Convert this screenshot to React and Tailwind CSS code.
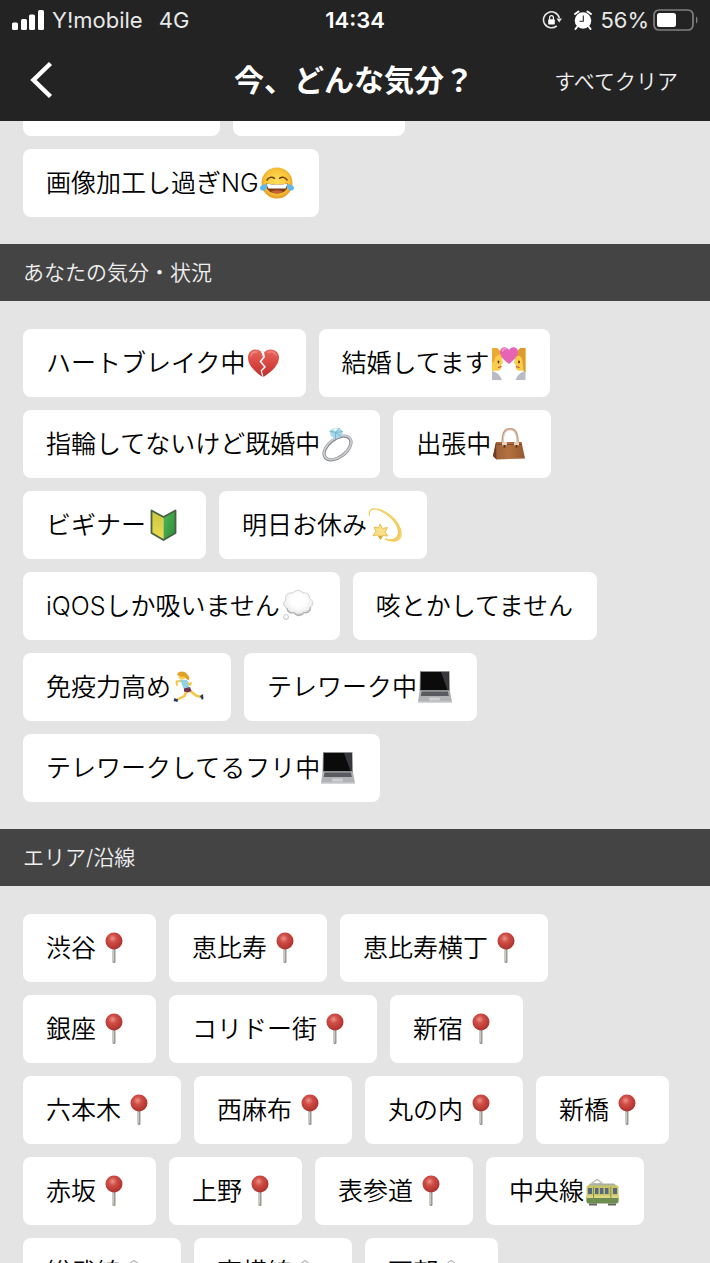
import React from "react";

const ICON = "h-9 w-9 shrink-0";

function Joy() {
  return (
    <svg viewBox="0 0 36 36" className={ICON} aria-hidden="true">
      <defs>
        <radialGradient id="joyFace" cx="50%" cy="45%" r="55%">
          <stop offset="0" stopColor="#fde05a" />
          <stop offset="0.7" stopColor="#f9c338" />
          <stop offset="1" stopColor="#e39a25" />
        </radialGradient>
      </defs>
      <circle cx="18" cy="18" r="15.500" fill="url(#joyFace)" />
      <path d="M8 15c1.800-3 5-3.400 7.500-1.700M20.500 13.300c2.500-1.700 5.700-1.300 7.500 1.700" fill="none" stroke="#6b3c10" strokeWidth="1.500" strokeLinecap="round" />
      <path d="M7 18.500c7 1.200 15 1.200 22 0 .3 6.500-4.500 10-11 10S6.700 25 7 18.500z" fill="#7a3b16" />
      <path d="M8 18.700c6.500 1.200 13.500 1.200 20 0-.1 2.500-.8 3.800-1.600 4.800H9.600C8.800 22.500 8.100 21.200 8 18.700z" fill="#fff" />
      <path d="M12 26.800c3-2 9-2 12 0-3.500 2-8.500 2-12 0z" fill="#c9603c" />
      <path d="M7.800 18.500c.8 3.500-.5 7-3.700 7.200-3.500 0-4-3.800-1.600-5.200 1.800-1 3.600-.7 5.300-2zM28.200 18.500c-.8 3.500.5 7 3.700 7.200 3.500 0 4-3.800 1.600-5.200-1.800-1-3.600-.7-5.300-2z" fill="#5fb8ea" />
    </svg>
  );
}

function BrokenHeart() {
  return (
    <svg viewBox="0 0 36 36" className={ICON} aria-hidden="true">
      <defs>
        <linearGradient id="heartRed" x1="0" y1="0" x2="0" y2="1">
          <stop offset="0" stopColor="#e8655c" />
          <stop offset="0.6" stopColor="#d6423d" />
          <stop offset="1" stopColor="#b92f2f" />
        </linearGradient>
      </defs>
      <path d="M15 6.500C11 2.500 2 4 2 12.500c0 8 7 14 14.500 19.500l-2-6.500 3.500-3.500-4.500-5.500 3.500-4.500z" fill="url(#heartRed)" />
      <path d="M18 7.500C22.500 2 33 4 33 12.500c0 8-8 14.500-15.500 19.500l-1.500-6 4-4-4.500-5.500 3.500-4.500z" fill="url(#heartRed)" />
      <path d="M5 11c.5-3 3-4.500 6-4M22 7.500c3-1.500 6.500-.5 8 2.500" fill="none" stroke="#f2988f" strokeWidth="1.500" strokeLinecap="round" opacity=".7" />
    </svg>
  );
}

function Couple() {
  return (
    <svg viewBox="0 0 36 36" className={ICON} aria-hidden="true">
      <path d="M2 3h5c4 3 5.500 7 5 11l1 4-1.500 1-.5 5c-1.500 2-4.500 2-6 1.500L2 27z" fill="#fbcd4a" />
      <path d="M2 3h5c2 1.500 3.500 4 4 6-4 1-6 3-6.500 7L2 18z" fill="#eda932" />
      <path d="M35.500 3h-5c-4 3-6 7-5.500 11l-1 4 1.500 1 .5 5c1.500 2 4.500 2 6 1.500l3.500 1.500z" fill="#fbcd4a" />
      <path d="M35.500 3h-5c-3 2-4.500 5-4.500 8 4-1 6 1 6.500 5l1 10 2 2z" fill="#dd9c30" />
      <path d="M2 26.500c5 .5 8 3.500 10 8.500H2zM35.500 26.500c-5 .5-8 3.500-10 8.500h10z" fill="#b9bcc4" />
      <ellipse cx="8.500" cy="17" rx=".9" ry="1.400" fill="#50320f" />
      <ellipse cx="29" cy="17" rx=".9" ry="1.400" fill="#50320f" />
      <path d="M8.500 22.500l2.500-.8M29 22.500l-2.500-.8" stroke="#c85c42" strokeWidth="1.300" strokeLinecap="round" />
      <path d="M19 19C15 16 10 12 10 7c0-5.500 6.500-6.500 9-2 2.500-4.500 9-3.500 9 2 0 5-5 8.500-9 12z" fill="#e565b4" />
      <path d="M12.500 6c.5-2 2-2.800 3.500-2.200" fill="none" stroke="#f6a6d5" strokeWidth="1.300" strokeLinecap="round" />
    </svg>
  );
}

function Ring() {
  return (
    <svg viewBox="0 0 36 36" className={ICON} aria-hidden="true">
      <ellipse cx="17.500" cy="22" rx="15.500" ry="9" transform="rotate(-38 17.500 22)" fill="none" stroke="#85888e" strokeWidth="3.200" />
      <ellipse cx="17.600" cy="21.600" rx="15.600" ry="9.200" transform="rotate(-38 17.600 21.600)" fill="none" stroke="#cdcfd3" strokeWidth="1.700" />
      <path d="M9.500 5l3.500-2.500 6.500-.5 3.500 3.500-1.500 5-6 2.500-4.500-3z" fill="#a8d9ea" />
      <path d="M9.500 5l6 1.500 4-4.500M15.500 6.500l6 4M15.500 6.500V13M23 5.500l-7.500 1" fill="none" stroke="#6fb0cb" strokeWidth=".8" />
      <path d="M13 3.300l3-1 2 1-3 2z" fill="#eefbff" />
    </svg>
  );
}

function Handbag() {
  return (
    <svg viewBox="0 0 36 36" className={ICON} aria-hidden="true">
      <defs>
        <linearGradient id="bagBody" x1="0" y1="0" x2="1" y2="0">
          <stop offset="0" stopColor="#9b5d36" />
          <stop offset="0.5" stopColor="#b3713f" />
          <stop offset="1" stopColor="#95572f" />
        </linearGradient>
      </defs>
      <path d="M11.500 18c0-10 1.500-15 7.500-15s7.500 5 8 15" fill="none" stroke="#c29a80" strokeWidth="2.200" />
      <path d="M12 18c0-9 1.500-14.200 7-14.200S26 9 26.500 18" fill="none" stroke="#ead0bd" strokeWidth="1" />
      <path d="M5 16h25.500L34 32.500 5.500 33.500 2 30z" fill="url(#bagBody)" />
      <path d="M5 16l.5 17.500L2 30z" fill="#6e3d22" />
      <path d="M5 18.500h26" stroke="#75431f" strokeWidth=".8" />
      <rect x="11" y="16" width="5" height="3.500" rx="1" fill="#e5d4c5" />
      <rect x="23" y="16" width="5" height="3.500" rx="1" fill="#e5d4c5" />
      <path d="M13.500 19v2.500M25.500 19v2.500" stroke="#4e2b18" strokeWidth="1.800" />
    </svg>
  );
}

function Beginner() {
  return (
    <svg viewBox="0 0 36 36" className={ICON} aria-hidden="true">
      <defs>
        <linearGradient id="leafYellow" x1="0" y1="0" x2="0" y2="1">
          <stop offset="0" stopColor="#c9c840" />
          <stop offset="1" stopColor="#efdc4e" />
        </linearGradient>
        <linearGradient id="leafGreen" x1="0" y1="0" x2="1" y2="1">
          <stop offset="0" stopColor="#55b855" />
          <stop offset="1" stopColor="#2b8a3b" />
        </linearGradient>
      </defs>
      <path d="M5.500 3.500L17.500 10v23L5.500 26z" fill="url(#leafYellow)" />
      <path d="M29.500 3.500L17.500 10v23l12-7z" fill="url(#leafGreen)" />
      <path d="M5.500 3.500L17.500 10l12-6.500V26l-12 7-12-7z" fill="none" stroke="#48613f" strokeWidth="1.800" strokeLinejoin="round" />
    </svg>
  );
}

function Dizzy() {
  return (
    <svg viewBox="0 0 36 36" className={ICON} aria-hidden="true">
      <path d="M2.500 8C1 1 9 0 18 5c11 6 18 17 15.500 25-2 5-9 5-15 2" fill="none" stroke="#f2cf62" strokeWidth="1.400" strokeLinecap="round" />
      <path d="M7 2.500c12 0 27 13 26.500 24C33 35 25 35.500 17 32c7 1 13 .5 14-6C32 17 19 4 7 2.500z" fill="#f3c95a" />
      <path d="M13 17l2.500 4.500 5-1-2.500 4.500 3 4-5-.5-2.500 4-2.500-4.500-5 .5 3-4-2-4.500 4.500 1z" fill="#f9e18a" stroke="#e9bd55" strokeWidth="1" strokeLinejoin="round" />
      <path d="M11 29l2.500 3.500 2-4z" fill="#dda63c" />
    </svg>
  );
}

function Thought() {
  return (
    <svg viewBox="0 0 36 36" className={ICON} aria-hidden="true">
      <defs>
        <radialGradient id="cloudShade" cx="50%" cy="40%" r="60%">
          <stop offset="0.4" stopColor="#fff" />
          <stop offset="0.8" stopColor="#efefef" />
          <stop offset="1" stopColor="#b8b8b8" />
        </radialGradient>
      </defs>
      <path d="M13 5c2-3.500 8-3.500 10 0 4-1 7 2 6.500 5.500 4 2 4.500 6.500 1 8.500.5 4-3 6.500-6.500 5.500-2.500 4-8 4-10 0-4 1.500-7-1-7-4.500-4-1.500-4.500-6-1-8C4 7.500 8 4 13 5z" fill="url(#cloudShade)" stroke="#cfcfcf" strokeWidth=".9" />
      <path d="M7 20c0 3.500 3 6 7 4.500 2 4 7.500 4 10 0 3.500 1 7-1.500 6.500-5.500" fill="none" stroke="#a5a5a5" strokeWidth="1.300" opacity=".7" />
      <circle cx="6" cy="29" r="2.500" fill="url(#cloudShade)" stroke="#c2c2c2" strokeWidth=".8" />
    </svg>
  );
}

function Runner() {
  return (
    <svg viewBox="0 0 36 36" className={ICON} aria-hidden="true">
      <path d="M16 21l-2.500 6-7 3.500M18 21l7 5.500 5 1.500" fill="none" stroke="#f7c544" strokeWidth="2.500" strokeLinecap="round" strokeLinejoin="round" />
      <path d="M10 12l-4.500.5L6 16M16 13l3 3 1-2" fill="none" stroke="#f7c544" strokeWidth="1.900" strokeLinecap="round" strokeLinejoin="round" />
      <path d="M9 10.500l7 .5 2.500 8-5.500 1.500z" fill="#8ed3e6" />
      <path d="M13 19.500l6-1.500 1.500 4-3.500 1.500-4-1z" fill="#72334e" />
      <circle cx="11" cy="7" r="3.600" fill="#fbcf4a" />
      <path d="M6 5.500C7 2 13 1.500 16 5c1.500 1.500 3 3.500 2 6-2 0-4-2-4.500-3.500-2 .500-5 0-7.500-2z" fill="#e0a02c" />
      <path d="M3.500 29l3.500 1.500-.5 2.500-4-1zM29 27l3-2 .5 4.500-1.500 1.500z" fill="#2d3763" />
    </svg>
  );
}

function Laptop() {
  return (
    <svg viewBox="0 0 36 36" className={ICON} aria-hidden="true">
      <path d="M3 2h29.500l.5 20H2.500z" fill="#8d8f92" />
      <path d="M3.800 3h28l.2 18H3.500z" fill="#0b0b0c" />
      <path d="M24 3h7.800l.2 18h-1.500z" fill="#38393c" />
      <path d="M2.500 22H33l2 11H1z" fill="#b0b2b5" />
      <path d="M4.500 22.500H31l.8 4.500H3.800z" fill="#5a5b5e" />
      <path d="M12.500 28.500h10l.6 3h-11.200z" fill="#cfd0d2" />
      <path d="M1 32.500h34V34H1z" fill="#d4d5d7" />
    </svg>
  );
}

function Pin() {
  return (
    <svg viewBox="0 0 36 36" className={ICON} aria-hidden="true">
      <defs>
        <radialGradient id="pinHead" cx="42%" cy="35%" r="60%">
          <stop offset="0" stopColor="#ec948a" />
          <stop offset="0.4" stopColor="#d04e46" />
          <stop offset="1" stopColor="#b03430" />
        </radialGradient>
      </defs>
      <rect x="16.500" y="16" width="3" height="17" rx="1.200" fill="#9a9590" />
      <rect x="17.100" y="18" width="1" height="13.500" fill="#cfcac5" />
      <circle cx="18" cy="11" r="8.500" fill="url(#pinHead)" />
    </svg>
  );
}

function Tram() {
  return (
    <svg viewBox="0 0 36 36" className={ICON} aria-hidden="true">
      <path d="M8 10l5-3.500 5 3.500-5 1z" fill="none" stroke="#b5b6b2" strokeWidth="1.100" />
      <path d="M4 13l2-2.500h24l3 2.500z" fill="#a9b0a0" />
      <rect x="2.500" y="12.500" width="32" height="17" rx="2" fill="#c9c566" />
      <path d="M2.500 23.500h32v5a2 2 0 0 1-2 2h-28a2 2 0 0 1-2-2z" fill="#6d8d50" />
      <path d="M2.500 22.500h32v2.500h-32z" fill="#ddd982" />
      <path d="M4 15h4v6H4zM11 15h3.500v6H11zM16 15h3.500v6H16zM21 15h3.500v6H21zM29 15h4v6h-4z" fill="#56697f" />
      <path d="M9.500 14v15M26.800 14v15" stroke="#818f55" strokeWidth="1" />
      <path d="M5 30.500h8v2H5zM24 30.500h8v2h-8z" fill="#62665c" />
    </svg>
  );
}

const MOODS = [
  ["ハートブレイク中", BrokenHeart],
  ["結婚してます", Couple],
  ["指輪してないけど既婚中", Ring],
  ["出張中", Handbag],
  ["ビギナー", Beginner],
  ["明日お休み", Dizzy],
  ["iQOSしか吸いません", Thought],
  ["咳とかしてません", null],
  ["免疫力高め", Runner],
  ["テレワーク中", Laptop],
  ["テレワークしてるフリ中", Laptop],
];

const AREAS = [
  ["渋谷", Pin],
  ["恵比寿", Pin],
  ["恵比寿横丁", Pin],
  ["銀座", Pin],
  ["コリドー街", Pin],
  ["新宿", Pin],
  ["六本木", Pin],
  ["西麻布", Pin],
  ["丸の内", Pin],
  ["新橋", Pin],
  ["赤坂", Pin],
  ["上野", Pin],
  ["表参道", Pin],
  ["中央線", Tram],
  ["総武線", Tram],
  ["東横線", Tram],
  ["西部", Tram],
];

function Chip({ label, Icon }) {
  return (
    <button type="button" className="flex h-[68px] items-center rounded-lg bg-white pr-6 pl-[23px] text-[25px] leading-9 font-[350] whitespace-nowrap text-black">
      {label}
      {Icon && <Icon />}
    </button>
  );
}

function ChipList({ items }) {
  return (
    <div className="flex flex-wrap gap-[13px] px-[23px] pt-7 pb-[27px]">
      {items.map(([label, Icon]) => (
        <Chip key={label} label={label} Icon={Icon} />
      ))}
    </div>
  );
}

function SectionTitle({ children }) {
  return (
    <h2 className="flex h-[57px] items-center bg-[#444444] px-[23px] text-[21px] font-[350] text-[#f0f0f0]">{children}</h2>
  );
}

function StatusBar() {
  return (
    <div className="grid h-10 grid-cols-[1fr_auto_1fr] items-center px-3 text-[22px] leading-7 text-[#e8e8e8]">
      <div className="flex items-center gap-2">
        <svg viewBox="0 0 32 20" className="h-5 w-8" fill="#fff" aria-hidden="true">
          <rect x="0" y="12.500" width="6" height="7.500" rx="1.500" />
          <rect x="9" y="9" width="6" height="11" rx="1.500" />
          <rect x="17" y="4.500" width="6" height="15.500" rx="1.500" />
          <rect x="26" y="0" width="6" height="20" rx="1.500" />
        </svg>
        <span>Y!mobile</span>
        <span className="ml-2">4G</span>
      </div>
      <span className="font-semibold text-white">14:34</span>
      <div className="flex items-center justify-end">
        <svg viewBox="0 0 20 20" className="mr-3 h-5 w-5" aria-hidden="true">
          <path d="M14.800 15.800A8 8 0 1 1 17.300 8" fill="none" stroke="#e8e8e8" strokeWidth="1.600" />
          <path d="M14.500 8.500h5.500l-2.800 4z" fill="#e8e8e8" />
          <rect x="6.200" y="9.200" width="6.600" height="5.300" rx=".8" fill="#fff" />
          <path d="M7.600 9.500V7.500a1.900 1.900 0 0 1 3.800 0v2" fill="none" stroke="#fff" strokeWidth="1.200" />
        </svg>
        <svg viewBox="0 0 18 20" className="mr-2 h-5 w-[18px]" aria-hidden="true">
          <circle cx="9" cy="10.500" r="8.300" fill="#fff" />
          <path d="M1 4l3.500-2.500M17 4l-3.500-2.500M3 17l-1.500 2M15 17l1.500 2" stroke="#fff" strokeWidth="2" strokeLinecap="round" />
          <path d="M9.300 5.500v5.800H5.500" fill="none" stroke="#232323" strokeWidth="1.100" />
        </svg>
        <span>56%</span>
        <svg viewBox="0 0 45 22" className="ml-1 h-[22px] w-[45px]" aria-hidden="true">
          <rect x="1" y="1" width="39" height="20" rx="5" fill="none" stroke="#808080" strokeWidth="1.700" />
          <rect x="4" y="4" width="19" height="14" rx="2.500" fill="#fff" />
          <path d="M43 7.500c2 1 2 6 0 7z" fill="#808080" />
        </svg>
      </div>
    </div>
  );
}

export default function App() {
  return (
    <div className="flex h-screen flex-col overflow-hidden bg-[#e4e4e4] font-[Inter,'Noto_Sans_CJK_JP',sans-serif]" lang="ja">
      <header className="relative z-10 h-[121px] shrink-0 bg-[#232323] text-white">
        <StatusBar />
        <div className="grid h-20 grid-cols-[1fr_auto_1fr] items-center pr-8 pl-[30px]">
          <button type="button" aria-label="戻る" className="justify-self-start">
            <svg viewBox="0 0 24 38" className="h-[38px] w-6" fill="none" stroke="#fff" strokeWidth="4.500" aria-hidden="true">
              <path d="M20.500 2.500L3.500 19l17 16.500" />
            </svg>
          </button>
          <h1 className="text-3xl font-bold">今、どんな気分？</h1>
          <button type="button" className="justify-self-end pt-1 text-[21px] font-[350] text-[#f0f0f0]">すべてクリア</button>
        </div>
      </header>
      <main className="min-h-0 flex-1 overflow-hidden">
        <section className="-mt-[81px] flex flex-wrap gap-[13px] px-[23px] pt-7 pb-[27px]">
          <div className="flex w-full gap-[13px]">
            <span className="h-[68px] w-[197px] rounded-lg bg-white" />
            <span className="h-[68px] w-[172px] rounded-lg bg-white" />
          </div>
          <Chip label="画像加工し過ぎNG" Icon={Joy} />
        </section>
        <section>
          <SectionTitle>あなたの気分・状況</SectionTitle>
          <ChipList items={MOODS} />
        </section>
        <section>
          <SectionTitle>エリア/沿線</SectionTitle>
          <ChipList items={AREAS} />
        </section>
      </main>
    </div>
  );
}
